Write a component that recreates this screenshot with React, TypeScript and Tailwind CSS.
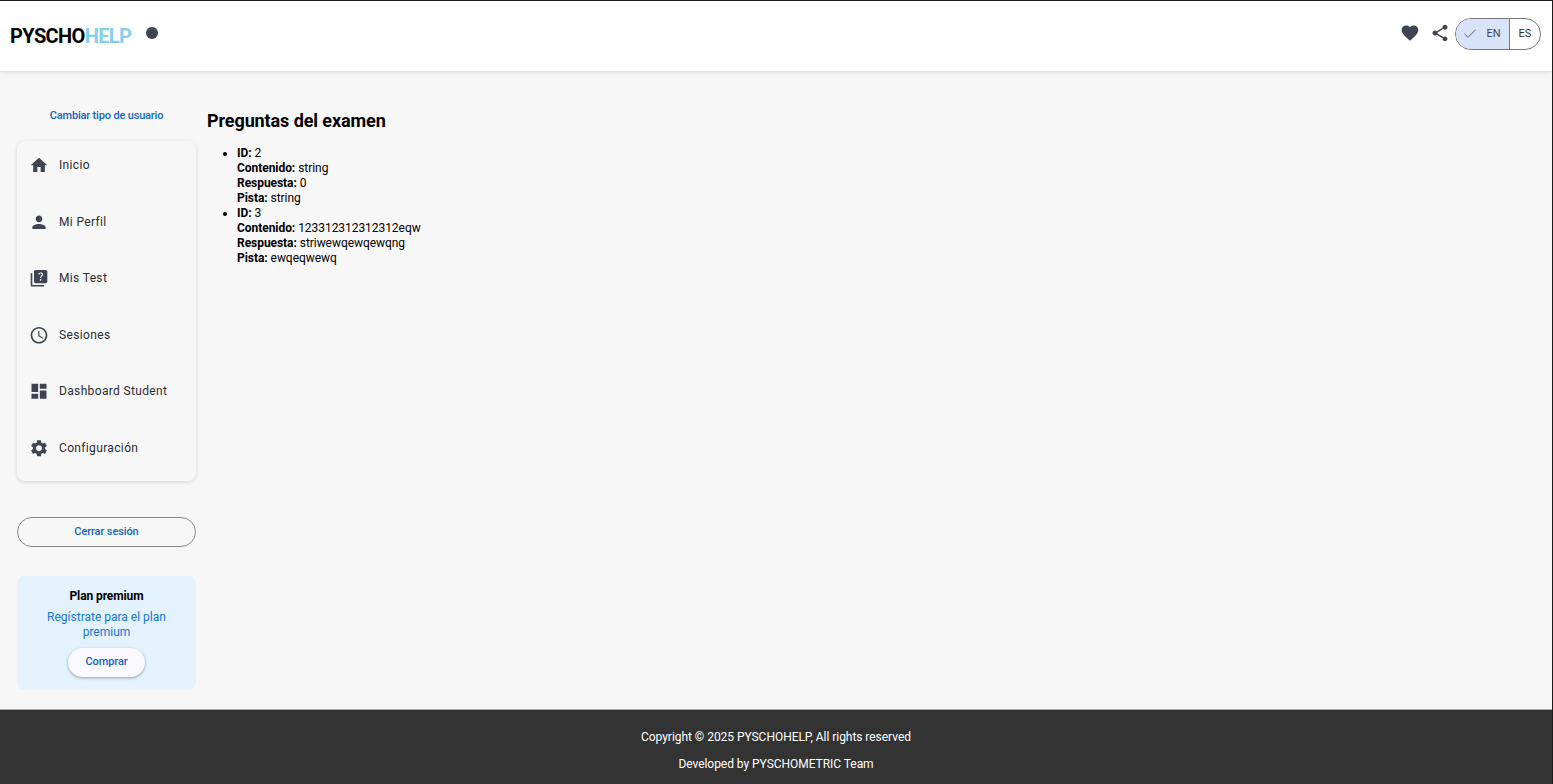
import { Check } from "lucide-react";
import { MdAccessTime, MdDashboard, MdFavorite, MdHome, MdPerson, MdQuiz, MdSettings, MdShare } from "react-icons/md";

const navItems = [
  { label: "Inicio", icon: MdHome },
  { label: "Mi Perfil", icon: MdPerson },
  { label: "Mis Test", icon: MdQuiz },
  { label: "Sesiones", icon: MdAccessTime },
  { label: "Dashboard Student", icon: MdDashboard },
  { label: "Configuración", icon: MdSettings },
];

const questions = [
  { id: "2", content: "string", answer: "0", hint: "string" },
  { id: "3", content: "123312312312312eqw", answer: "striwewqewqewqng", hint: "ewqeqwewq" },
];

function Header() {
  return (
    <header className="h-[70px] shrink-0 bg-white flex items-center justify-between pl-[10px] pr-[11px] shadow-[0_1px_4px_rgba(0,0,0,0.12)] relative">
      <div className="flex items-start">
        <span className="text-[20px] font-bold tracking-[-0.62px] leading-[30px] text-black">
          PYSCHO<span className="text-[#87ceeb]">HELP</span>
        </span>
        <span className="w-3 h-3 rounded-full bg-[#3f4451] ml-[15px] mt-[6px] block" />
      </div>
      <div className="flex items-center mb-[4px]">
        <MdFavorite className="w-5 h-5 text-[#3f4451] mr-[10px] mb-[2px]" />
        <MdShare className="w-5 h-5 text-[#3f4451] mr-[5px] mb-[2px]" />
        <div className="flex h-[32px] rounded-full border border-[#74777f] overflow-hidden text-[11px] text-[#2b2d33]">
          <div className="w-[54px] flex items-center justify-center gap-[8px] bg-[#d8e2f8] border-r border-[#74777f] pr-[2px] text-[#3f4451]">
            <Check className="w-[16px] h-[16px] text-[#3f4451]" strokeWidth={1.25} />
            <span>EN</span>
          </div>
          <div className="w-[30px] flex items-center justify-center">ES</div>
        </div>
      </div>
    </header>
  );
}

function Sidebar() {
  return (
    <aside className="w-[179px] ml-[17px] shrink-0 flex flex-col">
      <a className="mt-[38px] h-[14px] leading-[14px] text-center text-[11px] font-medium tracking-[-0.17px] text-[#1565c0]">Cambiar tipo de usuario</a>
      <nav className="mt-[18px] h-[340px] rounded-lg bg-[#f7f7f8] shadow-[0_1px_4px_rgba(0,0,0,0.14)] flex flex-col">
        {navItems.map((item) => (
          <div key={item.label} className="h-[56.5px] shrink-0 flex items-center pl-[12px] gap-[10px] translate-y-[-3.75px]">
            <item.icon className="w-5 h-5 shrink-0 text-[#3f4451]" />
            <span className="text-[12px] tracking-[0.35px] text-[#2b2d33]">{item.label}</span>
          </div>
        ))}
      </nav>
      <button className="mt-[36px] h-[30px] rounded-full border border-[#8a8a8a] text-[11px] font-medium tracking-[-0.1px] text-[#1565c0]">
        Cerrar sesión
      </button>
      <div className="mt-[29px] h-[114px] rounded-lg bg-[#e3f2fd] flex flex-col items-center pt-[11px]">
        <p className="text-[12px] leading-[18px] font-bold tracking-[-0.1px] text-black">Plan premium</p>
        <p className="mt-[5px] w-[130px] text-center text-[12px] leading-[15px] text-[#1976d2]">Regístrate para el plan premium</p>
        <button className="mt-[8px] w-[77px] h-[29px] rounded-full bg-[#f9f9ff] shadow-[0_1px_3px_rgba(0,0,0,0.35)] text-[11px] font-medium tracking-[-0.1px] text-[#1565c0]">
          Comprar
        </button>
      </div>
    </aside>
  );
}

function Questions() {
  return (
    <main className="ml-[11px] pt-[38px] text-black">
      <h2 className="text-[18px] leading-[24px] font-bold tracking-[-0.1px]">Preguntas del examen</h2>
      <ul className="list-disc pl-[30px] mt-[13px] text-[12px] leading-[15px] tracking-[-0.05px]">
        {questions.map((q) => (
          <li key={q.id}>
            <strong>ID:</strong> {q.id}
            <br />
            <strong>Contenido:</strong> {q.content}
            <br />
            <strong>Respuesta:</strong> {q.answer}
            <br />
            <strong>Pista:</strong> {q.hint}
          </li>
        ))}
      </ul>
    </main>
  );
}

export default function App() {
  return (
    <div className="h-[784px] flex flex-col overflow-hidden bg-[#f7f7f7] border-t border-r border-[#1a1a1a] font-['Roboto',sans-serif]">
      <Header />
      <div className="flex-1 flex min-h-0">
        <Sidebar />
        <Questions />
      </div>
      <footer className="h-[75px] shrink-0 bg-[#333333] border-t border-[#aaaaaa] text-[12px] tracking-[-0.04px] text-white text-center">
        <p className="mt-[19px] leading-[16px]">Copyright © 2025 PYSCHOHELP, All rights reserved</p>
        <p className="mt-[11px] leading-[16px]">Developed by PYSCHOMETRIC Team</p>
      </footer>
    </div>
  );
}
